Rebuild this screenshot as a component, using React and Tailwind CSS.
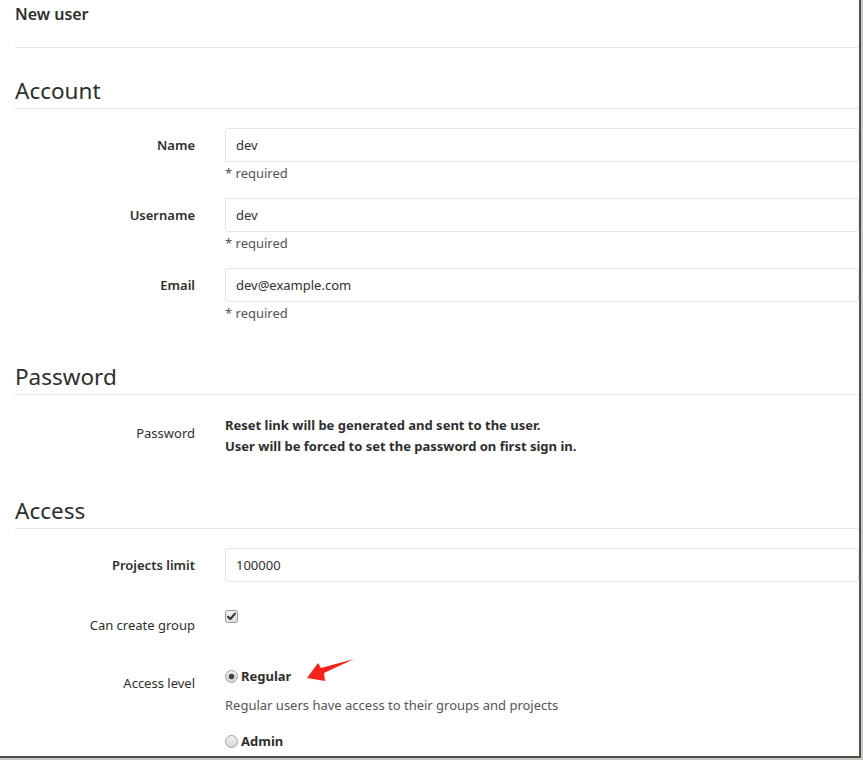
import React from "react";

const font = { fontFamily: '"Noto Sans", "Open Sans", sans-serif' };

function Label({ children, bold = true, pt = "pt-[7px]" }) {
  return (
    <div
      className={`w-[180px] shrink-0 text-right text-[13px] leading-[20px] text-[#2e2e2e] ${pt} ${
        bold ? "font-semibold" : "font-normal"
      }`}
    >
      {children}
    </div>
  );
}

function TextInput({ value }) {
  return (
    <div className="h-[34px] w-full rounded-[3px] border border-[#e5e5e5] bg-white pl-[10px] text-[13px] leading-[32px] text-[#2e2e2e]">
      {value}
    </div>
  );
}

function Heading({ children, mt }) {
  return (
    <div className={`${mt} border-b border-[#e8e8e8] pb-[3px]`}>
      <div className="text-[22.5px] leading-[28px] text-[#2e2e2e]">{children}</div>
    </div>
  );
}

function FieldRow({ label, value, mb }) {
  return (
    <div className={`flex ${mb}`}>
      <Label>{label}</Label>
      <div className="ml-[30px] flex-1">
        <TextInput value={value} />
        <div className="mt-[1px] text-[13px] leading-[20px] text-[#555]">* required</div>
      </div>
    </div>
  );
}

function Checkbox() {
  return (
    <svg width="13" height="13" viewBox="0 0 13 13">
      <defs>
        <linearGradient id="cbg" x1="0" y1="0" x2="0" y2="1">
          <stop offset="0" stopColor="#f2f2f2" />
          <stop offset="1" stopColor="#dcdcdc" />
        </linearGradient>
      </defs>
      <rect x="0.5" y="0.5" width="12" height="12" rx="2" fill="url(#cbg)" stroke="#9a9a9a" />
      <path d="M3 6.8 L5.3 9 L10 3.6" fill="none" stroke="#333" strokeWidth="2" strokeLinecap="round" strokeLinejoin="round" />
    </svg>
  );
}

function Radio({ checked }) {
  return (
    <svg width="13" height="13" viewBox="0 0 13 13">
      <defs>
        <linearGradient id={checked ? "rbg1" : "rbg2"} x1="0" y1="0" x2="0" y2="1">
          <stop offset="0" stopColor="#f4f4f4" />
          <stop offset="1" stopColor="#d4d4d4" />
        </linearGradient>
      </defs>
      <circle cx="6.5" cy="6.5" r="6" fill={`url(#${checked ? "rbg1" : "rbg2"})`} stroke="#a3a3a3" />
      {checked && <circle cx="6.5" cy="6.5" r="2.8" fill="#444" />}
    </svg>
  );
}

export default function App() {
  return (
    <div className="w-[863px] h-[760px] overflow-hidden bg-[#c9c9c2]" style={font}>
      <div className="relative h-[758px] w-[861px] border-r-2 border-b-2 border-[#4f4f4f] bg-white pl-[15px]">
        {/* title */}
        <div className="h-[48px] border-b border-[#e8e8e8] pt-[4px]">
          <div className="text-[16px] leading-[20px] font-semibold text-[#2e2e2e]">New user</div>
        </div>

        <Heading mt="mt-[29px]">Account</Heading>
        <div className="mt-[19px]">
          <FieldRow label="Name" value="dev" mb="mb-[15px]" />
          <FieldRow label="Username" value="dev" mb="mb-[15px]" />
          <FieldRow label="Email" value="dev@example.com" mb="" />
        </div>

        <Heading mt="mt-[40px]">Password</Heading>
        <div className="mt-[20px] flex">
          <Label bold={false} pt="pt-[8px]">Password</Label>
          <div className="ml-[30px] text-[13px] leading-[21px] font-bold text-[#2e2e2e]">
            <div>Reset link will be generated and sent to the user.</div>
            <div>User will be forced to set the password on first sign in.</div>
          </div>
        </div>

        <Heading mt="mt-[40px]">Access</Heading>
        <div className="mt-[19px] flex">
          <Label>Projects limit</Label>
          <div className="ml-[30px] flex-1">
            <TextInput value="100000" />
          </div>
        </div>

        <div className="mt-[26px] flex">
          <Label bold={false}>Can create group</Label>
          <div className="ml-[30px] flex-1 pt-[2px]">
            <Checkbox />
          </div>
        </div>

        <div className="mt-[31px] flex">
          <Label bold={false}>Access level</Label>
          <div className="ml-[30px] flex-1">
            <div className="flex items-center gap-[3px] text-[13px] leading-[20px] font-bold text-[#2e2e2e]">
              <Radio checked />
              <span>Regular</span>
            </div>
            <div className="mt-[9px] text-[13px] leading-[20px] text-[#555]">
              Regular users have access to their groups and projects
            </div>
            <div className="mt-[16px] flex items-center gap-[3px] text-[13px] leading-[20px] font-bold text-[#2e2e2e]">
              <Radio />
              <span>Admin</span>
            </div>
          </div>
        </div>

        {/* annotation arrow */}
        <svg className="absolute left-0 top-0 pointer-events-none" width="861" height="758">
          <polygon
            points="307,678 318,663 321,668 354,659 324,673 325,681"
            fill="#f5231c"
          />
        </svg>
      </div>
    </div>
  );
}
